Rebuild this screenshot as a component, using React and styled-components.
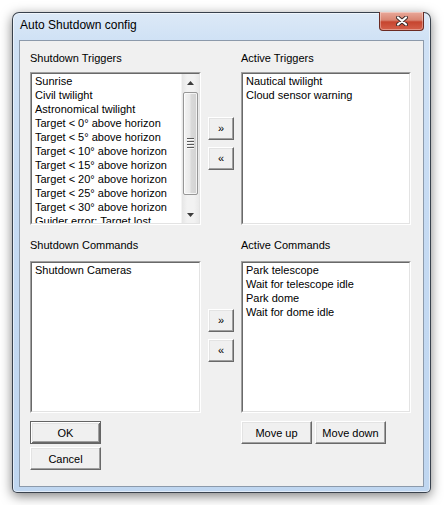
import styled, { createGlobalStyle } from "styled-components";

const GlobalStyle = createGlobalStyle`
  body {
    margin: 0;
    background: #ffffff;
    font-family: "Liberation Sans", Arial, sans-serif;
  }
`;

const triggers = [
  "Sunrise",
  "Civil twilight",
  "Astronomical twilight",
  "Target < 0° above horizon",
  "Target < 5° above horizon",
  "Target < 10° above horizon",
  "Target < 15° above horizon",
  "Target < 20° above horizon",
  "Target < 25° above horizon",
  "Target < 30° above horizon",
  "Guider error: Target lost",
];
const activeTriggers = ["Nautical twilight", "Cloud sensor warning"];
const commands = ["Shutdown Cameras"];
const activeCommands = [
  "Park telescope",
  "Wait for telescope idle",
  "Park dome",
  "Wait for dome idle",
];

const ListBox = ({ items, height, width, scroll }) => (
  <ListOuter $w={width} $h={height}>
    <ListInner>
      <Items>
        {items.map((t) => (
          <Item key={t}>{t}</Item>
        ))}
      </Items>
      {scroll && (
        <ScrollBar>
          <ScrollArrow>
            <svg width="7" height="4" viewBox="0 0 7 4">
              <polygon points="3.5,0 7,4 0,4" fill="#3c3c3c" />
            </svg>
          </ScrollArrow>
          <Track>
            <Thumb>
              <Grip>
                <span />
                <span />
                <span />
                <span />
              </Grip>
            </Thumb>
          </Track>
          <ScrollArrow>
            <svg width="7" height="4" viewBox="0 0 7 4">
              <polygon points="0,0 7,0 3.5,4" fill="#3c3c3c" />
            </svg>
          </ScrollArrow>
        </ScrollBar>
      )}
    </ListInner>
  </ListOuter>
);

const App = () => {
  return (
    <Page>
      <GlobalStyle />
      <Window>
        <TitleBar>
          <TitleText>Auto Shutdown config</TitleText>
          <CloseButton>
            <svg width="12" height="10" viewBox="0 0 12 10">
              <path d="M2 1.5 L10 8.5 M10 1.5 L2 8.5" stroke="#3a2a28" strokeWidth="4" strokeLinecap="round" />
              <path d="M2 1.5 L10 8.5 M10 1.5 L2 8.5" stroke="#ffffff" strokeWidth="2.2" strokeLinecap="round" />
            </svg>
          </CloseButton>
        </TitleBar>
        <Client>
          <Section $gap={7}>
            <Label>Shutdown Triggers</Label>
            <span />
            <Label>Active Triggers</Label>
            <ListBox items={triggers} width={171} height={153} scroll />
            <Mover $offset={45}>
              <SmallButton>»</SmallButton>
              <SmallButton>«</SmallButton>
            </Mover>
            <ListBox items={activeTriggers} width={170} height={153} />
          </Section>
          <Section $gap={9} $top={14}>
            <Label>Shutdown Commands</Label>
            <span />
            <Label>Active Commands</Label>
            <ListBox items={commands} width={171} height={152} />
            <Mover $offset={48}>
              <SmallButton>»</SmallButton>
              <SmallButton>«</SmallButton>
            </Mover>
            <ListBox items={activeCommands} width={170} height={152} />
          </Section>
          <Footer>
            <ButtonStack>
              <Button $default>OK</Button>
              <Button>Cancel</Button>
            </ButtonStack>
            <span />
            <ButtonRow>
              <Button>Move up</Button>
              <Button>Move down</Button>
            </ButtonRow>
          </Footer>
        </Client>
      </Window>
    </Page>
  );
};

export default App;

const Page = styled.div`
  padding: 12px;
`;

const Window = styled.div`
  box-sizing: border-box;
  width: 419px;
  height: 481px;
  display: flex;
  flex-direction: column;
  padding: 0 6px 5px 6px;
  border: 1px solid rgba(40, 48, 58, 0.9);
  border-radius: 7px 7px 5px 5px;
  background: linear-gradient(to bottom, #dce9f7 0%, #cfe1f5 6%, #c6dbf3 40%, #bfd6f0 100%);
  box-shadow: 0 3px 12px rgba(0, 0, 0, 0.5), inset 0 0 0 1px rgba(255, 255, 255, 0.55);
`;

const TitleBar = styled.div`
  height: 27px;
  display: flex;
  justify-content: space-between;
  align-items: flex-start;
`;

const TitleText = styled.div`
  margin: 5px 0 0 1px;
  font-size: 12px;
  line-height: 15px;
  color: #000;
`;

const CloseButton = styled.div`
  box-sizing: border-box;
  width: 45px;
  height: 19px;
  margin-top: -1px;
  display: flex;
  align-items: center;
  justify-content: center;
  border: 1px solid #6b2a22;
  border-top: none;
  border-radius: 0 0 4px 4px;
  background: linear-gradient(to bottom, #e9a99a 0%, #d98572 45%, #c6452f 55%, #d4604a 100%);
  box-shadow: inset 0 0 0 1px rgba(255, 255, 255, 0.35);
`;

const Client = styled.div`
  flex: 1;
  box-sizing: border-box;
  background: #f0f0f0;
  border: 1px solid #8c9aab;
  padding: 11px 0 0 10px;
`;

const Section = styled.div`
  display: grid;
  grid-template-columns: 171px 26px 170px;
  column-gap: 7px;
  row-gap: ${(p) => p.$gap}px;
  margin-top: ${(p) => p.$top || 0}px;
`;

const Label = styled.div`
  font-size: 11px;
  line-height: 13px;
  height: 13px;
  color: #000;
  white-space: nowrap;
`;

const ListOuter = styled.div`
  box-sizing: border-box;
  width: ${(p) => p.$w}px;
  height: ${(p) => p.$h}px;
  border: 1px solid;
  border-color: #a0a0a0 #ffffff #ffffff #a0a0a0;
  display: flex;
`;

const ListInner = styled.div`
  flex: 1;
  display: flex;
  min-width: 0;
  border: 1px solid;
  border-color: #696969 #e3e3e3 #e3e3e3 #696969;
  background: #ffffff;
  overflow: hidden;
`;

const Items = styled.div`
  flex: 1;
  min-width: 0;
  padding: 0 3px;
  overflow: hidden;
`;

const Item = styled.div`
  font-size: 11px;
  line-height: 14px;
  height: 14px;
  color: #000;
  white-space: nowrap;
`;

const ScrollBar = styled.div`
  width: 17px;
  display: flex;
  flex-direction: column;
  background: linear-gradient(to right, #e6e6e6, #f2f2f2 30%, #f2f2f2 70%, #e9e9e9);
  border-left: 1px solid #f4f4f4;
`;

const ScrollArrow = styled.div`
  height: 17px;
  display: flex;
  align-items: center;
  justify-content: center;
`;

const Track = styled.div`
  flex: 1;
  padding: 1px 1px 0 1px;
`;

const Thumb = styled.div`
  box-sizing: border-box;
  height: 103px;
  border: 1px solid #979797;
  border-radius: 2px;
  background: linear-gradient(to right, #f4f4f4, #e9e9e9 45%, #d9d9d9 55%, #d2d2d2);
  box-shadow: inset 0 0 0 1px rgba(255, 255, 255, 0.7);
  display: flex;
  align-items: center;
  justify-content: center;
`;

const Grip = styled.div`
  display: flex;
  flex-direction: column;
  gap: 1px;

  span {
    display: block;
    width: 7px;
    height: 1px;
    background: #5a5a5a;
    border-bottom: 1px solid #fafafa;
  }
`;

const Mover = styled.div`
  display: flex;
  flex-direction: column;
  gap: 7px;
  padding-top: ${(p) => p.$offset}px;
`;

const BaseButton = styled.button`
  box-sizing: border-box;
  padding: 0;
  margin: 0;
  font-family: "Liberation Sans", Arial, sans-serif;
  font-size: 11px;
  color: #000;
  background: #f0f0f0;
  border: 1px solid;
  border-color: #ffffff #696969 #696969 #ffffff;
  box-shadow: inset -1px -1px 0 #a0a0a0, inset 1px 1px 0 #e3e3e3;
`;

const SmallButton = styled(BaseButton)`
  width: 26px;
  height: 23px;
  line-height: 1;
`;

const Button = styled(BaseButton)`
  width: 71px;
  height: 23px;
  ${(p) =>
    p.$default &&
    `
    border-color: #646464;
    box-shadow: inset 1px 1px 0 #ffffff, inset -1px -1px 0 #696969,
      inset 2px 2px 0 #e3e3e3, inset -2px -2px 0 #a0a0a0;
  `}
`;

const Footer = styled.div`
  display: grid;
  grid-template-columns: 171px 26px 170px;
  column-gap: 7px;
  margin-top: 8px;
`;

const ButtonStack = styled.div`
  display: flex;
  flex-direction: column;
  gap: 3px;
`;

const ButtonRow = styled.div`
  display: flex;
  gap: 3px;
`;
